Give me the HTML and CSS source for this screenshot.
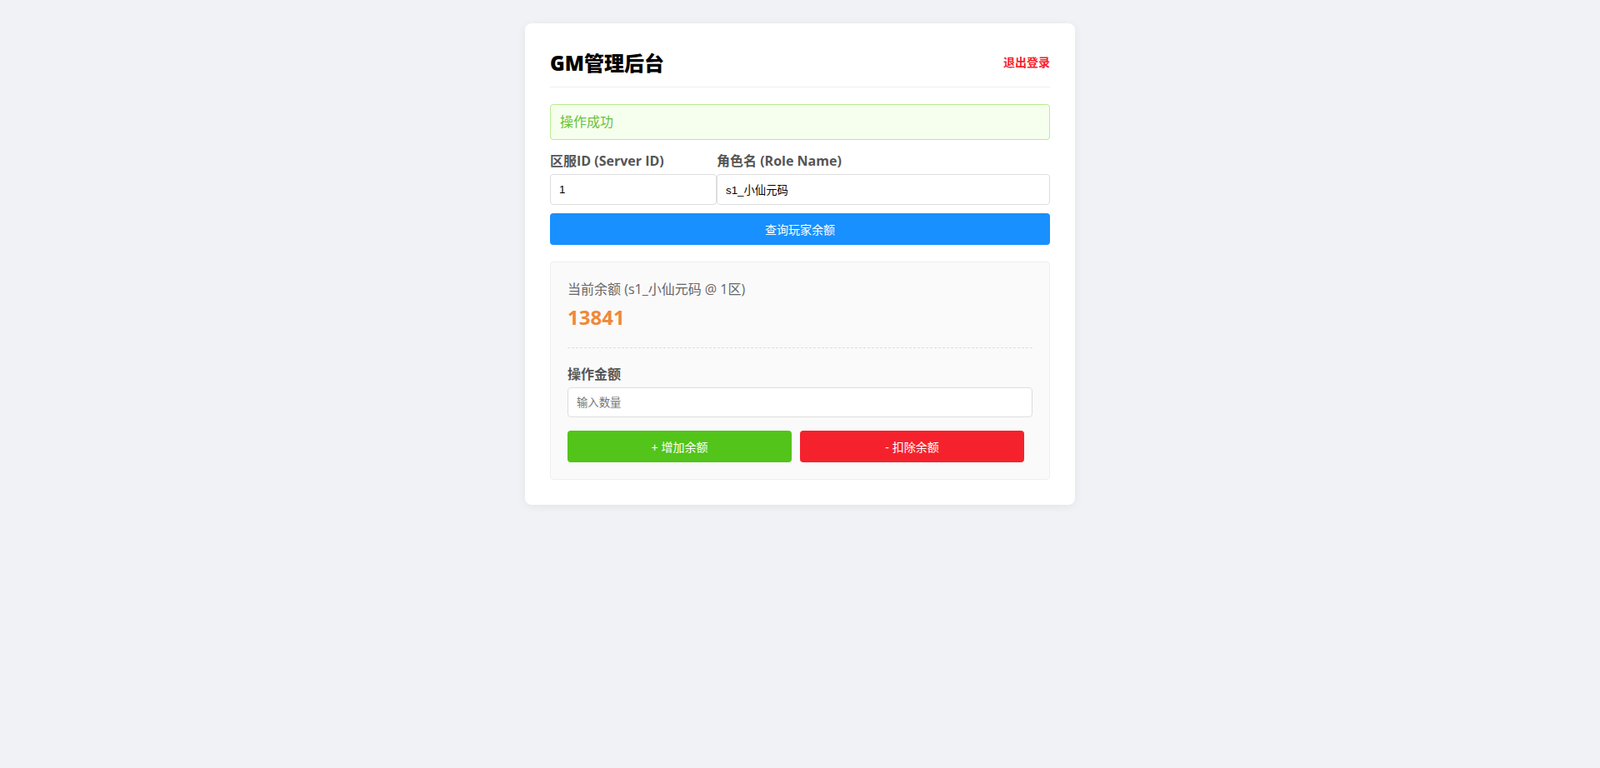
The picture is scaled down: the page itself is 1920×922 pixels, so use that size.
FILE: index.html
```html
<!DOCTYPE html>
<html lang="zh-CN">
<head>
<meta charset="utf-8">
<title>GM管理后台</title>
<link rel="stylesheet" href="styles.css">
</head>
<body>
<div class="card">
  <div class="header">
    <h1 class="title">GM管理后台</h1>
    <a class="logout" href="#">退出登录</a>
  </div>
  <div class="alert">操作成功</div>
  <div class="row">
    <div class="group group-server">
      <label class="label">区服ID (Server ID)</label>
      <input class="input" type="text" value="1">
    </div>
    <div class="group group-role">
      <label class="label">角色名 (Role Name)</label>
      <input class="input" type="text" value="s1_小仙元码">
    </div>
  </div>
  <button class="btn btn-primary btn-block">查询玩家余额</button>
  <div class="balance">
    <div class="balance-label">当前余额 (s1_小仙元码 @ 1区)</div>
    <div class="amount">13841</div>
    <div class="divider"></div>
    <label class="label">操作金额</label>
    <input class="input" type="text" placeholder="输入数量">
    <div class="actions">
      <button class="btn btn-success">+ 增加余额</button>
      <button class="btn btn-danger">- 扣除余额</button>
    </div>
  </div>
</div>
</body>
</html>
```
FILE: styles.css
```css
html, body {
  margin: 0;
  padding: 0;
}
body {
  background: #f0f2f5;
  font-family: "Open Sans", "Noto Sans CJK SC", sans-serif;
  color: #333;
  padding: 28px 0;
}
.card {
  width: 600px;
  margin: 0 auto;
  padding: 30px;
  background: #fff;
  border-radius: 8px;
  box-shadow: 0 2px 12px rgba(0, 0, 0, 0.06);
}
.header {
  display: flex;
  justify-content: space-between;
  align-items: center;
  padding-bottom: 10px;
  border-bottom: 1px solid #eee;
  margin-bottom: 20px;
}
.title {
  margin: 0;
  font-size: 24px;
  line-height: 36px;
  font-weight: 800;
  color: #000;
}
.logout {
  color: #f5222d;
  font-size: 14px;
  font-weight: 600;
  text-decoration: none;
  line-height: 20px;
  margin-top: -3px;
}
.alert {
  padding: 11px 11px;
  border: 1px solid #b7eb8f;
  background: #f6ffed;
  color: #67c23a;
  border-radius: 4px;
  font-size: 16px;
  line-height: 19px;
  margin-bottom: 15px;
}
.row {
  display: flex;
}
.group-server {
  flex: 1;
}
.group-role {
  flex: 2;
}
.label {
  display: block;
  font-size: 16px;
  font-weight: 700;
  color: #555;
  line-height: 21px;
  margin-bottom: 5px;
}
.input {
  display: block;
  width: 100%;
  box-sizing: border-box;
  height: 37px;
  padding: 8px 10px;
  border: 1px solid #ddd;
  border-radius: 4px;
  font-family: "Liberation Sans", "Noto Sans CJK SC", sans-serif;
  font-size: 13.33px;
  color: #000;
  background: #fff;
  outline: none;
}
.input::placeholder {
  color: #757575;
}
.btn {
  height: 38px;
  border: none;
  border-radius: 4px;
  color: #fff;
  font-family: "Liberation Sans", "Noto Sans CJK SC", sans-serif;
  font-size: 14px;
  cursor: pointer;
  padding: 0 10px;
}
.btn-block {
  display: block;
  width: 100%;
  margin-top: 10px;
}
.btn-primary {
  background: #1890ff;
}
.btn-success {
  background: #52c41a;
}
.btn-danger {
  background: #f5222d;
}
.balance {
  margin-top: 20px;
  background: #fafafa;
  border: 1px solid #eee;
  border-radius: 4px;
  padding: 20px;
}
.balance-label {
  color: #666;
  font-size: 16px;
  line-height: 24px;
}
.amount {
  margin-top: 6px;
  color: #f0883a;
  font-size: 24px;
  font-weight: 700;
  line-height: 32px;
}
.divider {
  border-top: 1px dashed #ddd;
  margin: 20px 0 21px;
}
.balance .input {
  height: 36px;
}
.actions {
  display: flex;
  margin-top: 16px;
}
.actions .btn {
  flex: 1;
  margin-right: 10px;
}
```
